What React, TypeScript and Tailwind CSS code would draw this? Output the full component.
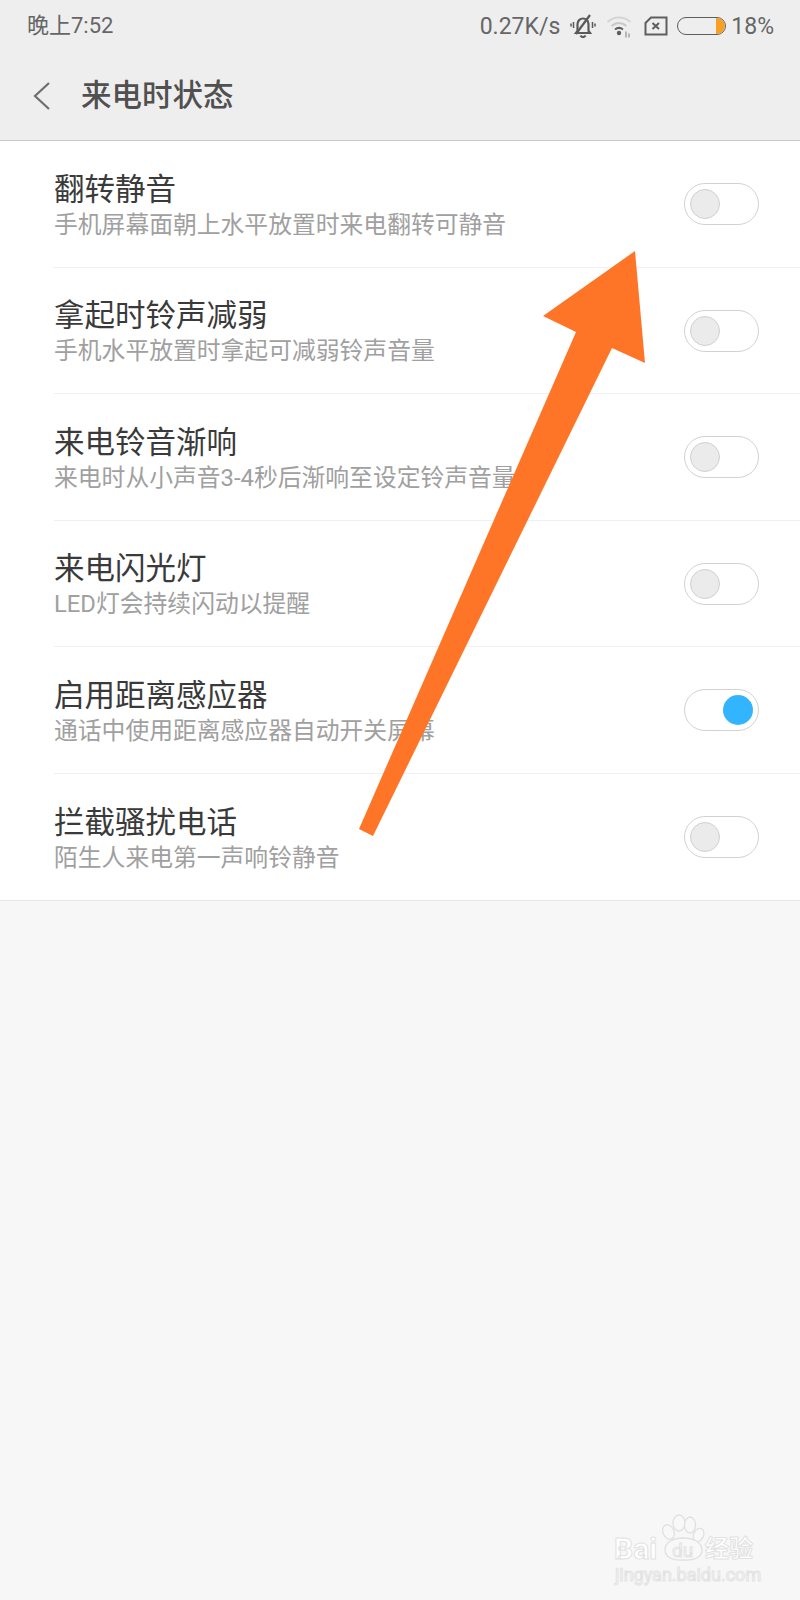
import React from 'react'

const rows = [
  { title: '翻转静音', desc: '手机屏幕面朝上水平放置时来电翻转可静音', on: false },
  { title: '拿起时铃声减弱', desc: '手机水平放置时拿起可减弱铃声音量', on: false },
  { title: '来电铃音渐响', desc: '来电时从小声音3-4秒后渐响至设定铃声音量', on: false },
  { title: '来电闪光灯', desc: 'LED灯会持续闪动以提醒', on: false },
  { title: '启用距离感应器', desc: '通话中使用距离感应器自动开关屏幕', on: true },
  { title: '拦截骚扰电话', desc: '陌生人来电第一声响铃静音', on: false },
]

function Toggle({ on }: { on: boolean }) {
  return (
    <div className={`mt-[0.5px] flex h-[42px] w-[75px] items-center rounded-full border border-[#d2d2d2] bg-white px-[5px] ${on ? 'justify-end' : 'justify-start'}`}>
      {on ? (
        <div className="h-[30px] w-[30px] rounded-full bg-[#33b4ff]" />
      ) : (
        <div className="h-[30px] w-[30px] rounded-full border border-[#d0d0d0] bg-[#ebebeb]" />
      )}
    </div>
  )
}

function StatusBar() {
  return (
    <div className="flex h-[52px] items-center justify-between pl-[27px] pr-[26px] text-[#666]">
      <span className="text-[22px] leading-none">晚上7:52</span>
      <div className="flex items-center">
        <span className="text-[23px] leading-none">0.27K/s</span>
        {/* 静音 */}
        <svg className="ml-[10px]" width="26" height="26" viewBox="0 0 26 26" fill="none" stroke="#5a5a5a" strokeWidth="2.200">
          <path d="M7.500 18 V11 a5.500 5.500 0 0 1 11 0 V18 L20 20 H6 Z" />
          <path d="M10.500 22.500 a2.800 2.800 0 0 0 5 0" />
          <path d="M6 21 L20 2" />
          <path d="M3.500 9 V15 M22.500 9 V15 M1 10.500 V13.500 M25 10.500 V13.500" strokeWidth="1.500" />
        </svg>
        {/* Wi-Fi */}
        <svg className="ml-[10px]" width="27" height="24" viewBox="0 0 27 24" fill="none">
          <path d="M1.500 8 C8 2 18 2 24.500 8" stroke="#d4d4d4" strokeWidth="2" />
          <path d="M5.500 12 C10 8 16 8 20.500 12" stroke="#c8c8c8" strokeWidth="2" />
          <path d="M9 15.500 C11.500 13.500 14.500 13.500 17 15.500" stroke="#5e5e5e" strokeWidth="2" />
          <circle cx="13" cy="19" r="2.200" fill="#5e5e5e" />
          <path d="M20 17.500 V23.500 M23 19.500 V23.500" stroke="#9a9a9a" strokeWidth="1.300" />
        </svg>
        {/* SIM */}
        <svg className="ml-[11px]" width="24" height="20" viewBox="0 0 24 20" fill="none" stroke="#5e5e5e" strokeWidth="2">
          <path d="M7 1.500 H22.500 V18.500 H1.500 V7 Z" />
          <path d="M8.500 7 L15 13 M15 7 L8.500 13" />
        </svg>
        {/* 电池 */}
        <div className="relative ml-[9px] h-[18px] w-[49px] overflow-hidden rounded-full border border-[#5e5e5e]">
          <div className="absolute right-0 top-0 h-full w-[9px] rounded-r-full bg-[#f7a023]" />
        </div>
        <span className="ml-[5px] text-[23px] leading-none">18%</span>
      </div>
    </div>
  )
}

function Watermark() {
  return (
    <div className="pointer-events-none absolute left-[612px] top-[1512px] h-[72px] w-[150px] text-white [-webkit-text-stroke:1px_#e2e2e2]">
      <svg className="absolute left-[50px] top-0" width="44" height="50" viewBox="0 0 44 50" fill="#f8f8f8" stroke="#e0e0e0" strokeWidth="1.300">
        <ellipse cx="6.500" cy="20" rx="5.500" ry="7.500" transform="rotate(-25 6.500 20)" />
        <ellipse cx="17" cy="11" rx="6" ry="8" />
        <ellipse cx="28" cy="13" rx="5.500" ry="8" />
        <ellipse cx="36.500" cy="23" rx="5" ry="7" transform="rotate(25 36.500 23)" />
        <path d="M3 38 C3 30 11 26 21 26 C31 26 40 30 40 38 C40 45 32 49 21 48 C11 49 3 45 3 38 Z" />
      </svg>
      <span className="absolute left-[2px] top-[22px] text-[30px] font-bold leading-none">Bai</span>
      <span className="absolute left-[60px] top-[29px] text-[19px] leading-none">du</span>
      <span className="absolute left-[93px] top-[25px] whitespace-nowrap text-[24px] font-bold leading-none">经验</span>
      <span className="absolute left-[3px] top-[54px] whitespace-nowrap text-[18px] leading-none">jingyan.baidu.com</span>
    </div>
  )
}

export default function App() {
  return (
    <div className="relative h-[1600px] w-[800px] overflow-hidden bg-[#f7f7f7] font-['Roboto','Noto_Sans_CJK_SC',sans-serif]">
      <div className="h-[141px] border-b border-[#c9c9c9] bg-[#eeeeee]">
        <StatusBar />
        <div className="flex h-[88px] items-center pl-[33px]">
          <svg width="18" height="30" viewBox="0 0 18 30" fill="none" stroke="#6e6e6e" strokeWidth="2.200">
            <path d="M16 2 L2 15 L16 28" />
          </svg>
          <h1 className="ml-[30px] text-[30.5px] font-medium leading-none text-[#505050]">来电时状态</h1>
        </div>
      </div>

      <div className="border-b border-[#e6e6e6] bg-white">
        {rows.map((row, i) => (
          <div key={row.title} className="flex h-[126.5px] pl-[54px]">
            <div className={`flex flex-1 items-center justify-between pr-[41px] ${i < rows.length - 1 ? 'border-b border-[#f0f0f0]' : ''}`}>
              <div className="mt-[4px]">
                <div className="text-[30.5px] leading-[36px] text-[#3a3a3a]">{row.title}</div>
                <div className="mt-[2px] whitespace-nowrap text-[23.8px] leading-[30px] text-[#a0a0a0]">{row.desc}</div>
              </div>
              <Toggle on={row.on} />
            </div>
          </div>
        ))}
      </div>

      {/* 箭头 */}
      <svg className="pointer-events-none absolute left-0 top-0" width="800" height="1600" viewBox="0 0 800 1600">
        <polygon points="635,251 543,316 576,332 359,829 373,836 612,348 645,363" fill="#ff7527" />
      </svg>

      <Watermark />
    </div>
  )
}
